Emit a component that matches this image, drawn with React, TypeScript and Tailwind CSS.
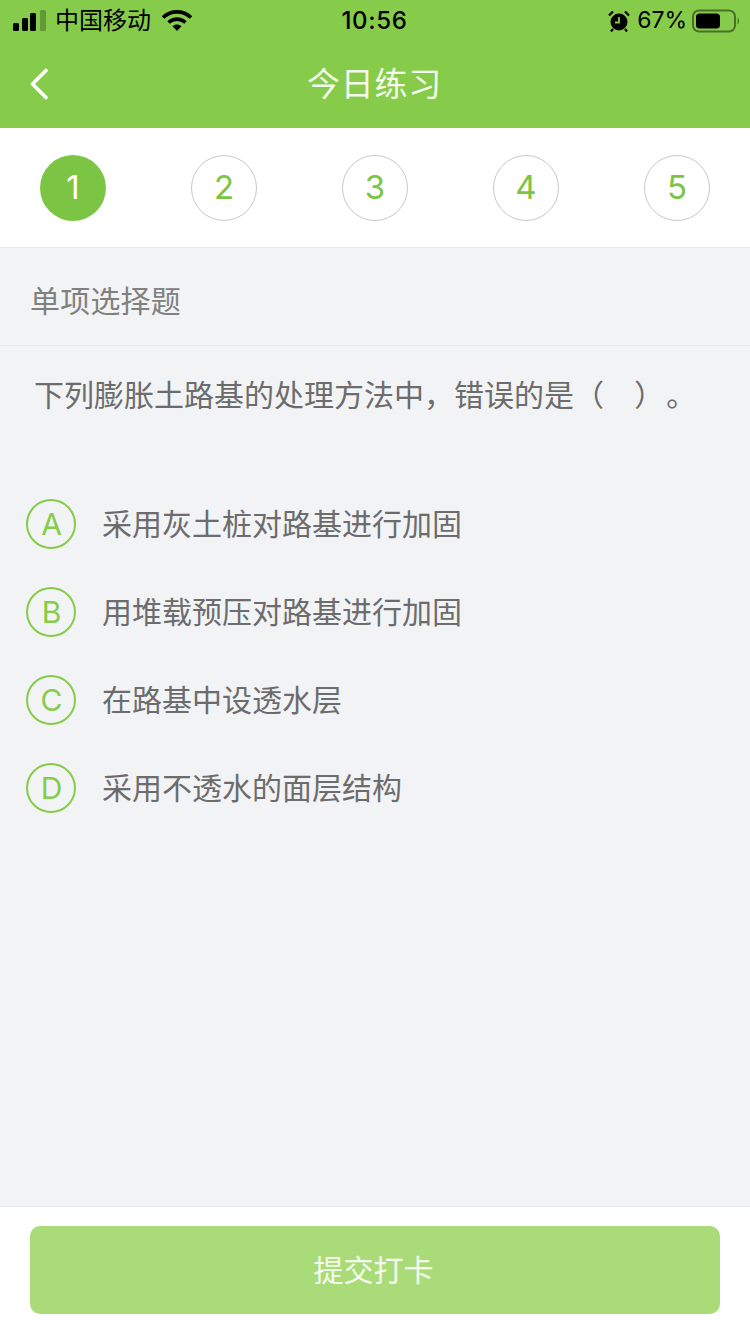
import React from "react";

const font = { fontFamily: '"Inter", "Noto Sans CJK SC", sans-serif' };

const steps = ["1", "2", "3", "4", "5"];
const options = [
  { key: "A", text: "采用灰土桩对路基进行加固" },
  { key: "B", text: "用堆载预压对路基进行加固" },
  { key: "C", text: "在路基中设透水层" },
  { key: "D", text: "采用不透水的面层结构" },
];

const StatusBar = () => (
  <div className="flex h-[40px] items-center justify-between pl-[13px] pr-[11px] pt-[1px] text-black">
    <div className="flex w-[240px] items-center">
      <svg width="33" height="21" viewBox="0 0 33 21" className="mr-[9px]">
        <rect x="0" y="13" width="6" height="8" rx="1.5" fill="#000" />
        <rect x="9" y="8" width="6" height="13" rx="1.5" fill="#000" />
        <rect x="17" y="3" width="6" height="18" rx="1.5" fill="#000" />
        <rect x="27" y="0" width="6" height="21" rx="1.5" fill="#000" opacity="0.25" />
      </svg>
      <span className="text-[24px] leading-none">中国移动</span>
      <svg width="30" height="22" viewBox="0 0 30 22" className="ml-[11px]">
        <path d="M1 7.5C9 0 21 0 29 7.5" fill="none" stroke="#000" strokeWidth="3.6" />
        <path d="M6.5 12.5C11.5 8 18.5 8 23.5 12.5" fill="none" stroke="#000" strokeWidth="3.6" />
        <path d="M10.5 16.2C13.5 13.8 16.5 13.8 19.5 16.2L15 21Z" fill="#000" />
      </svg>
    </div>
    <span className="text-[24px] font-medium leading-none tracking-[0.7px]">10:56</span>
    <div className="flex w-[243px] items-center justify-end">
      <svg width="22" height="22" viewBox="0 0 22 22" className="mr-[7px]">
        <circle cx="11" cy="12" r="8.5" fill="#000" />
        <path d="M11 7v5.500H7" fill="none" stroke="#86cc4a" strokeWidth="1.8" />
        <path d="M1 5.500L5 1.500M21 5.500L17 1.500M5 19l-2 2.500M17 19l2 2.500" stroke="#000" strokeWidth="2.2" />
      </svg>
      <span className="text-[23px] leading-none">67%</span>
      <svg width="47" height="24" viewBox="0 0 47 24" className="ml-[5px]">
        <rect x="1" y="1.5" width="42" height="21" rx="6" fill="none" stroke="#000" strokeOpacity="0.45" strokeWidth="2" />
        <rect x="4" y="4.5" width="24" height="15" rx="3.5" fill="#000" />
        <path d="M45.500 8.500c1 .6 1.500 2 1.500 3.500s-.5 2.900-1.500 3.500z" fill="#000" fillOpacity="0.45" />
      </svg>
    </div>
  </div>
);

export default function App() {
  return (
    <div className="flex h-[1334px] w-[750px] flex-col overflow-hidden bg-[#f2f3f5]" style={font}>
      <header className="h-[128px] bg-[#86cc4a]">
        <StatusBar />
        <div className="relative flex h-[88px] items-center justify-center pt-[1px]">
          <svg width="20" height="32" viewBox="0 0 20 32" className="absolute left-[29px] top-[28px]">
            <path d="M17 2.500 3.500 16 17 29.500" fill="none" stroke="#fff" strokeWidth="3.6" strokeLinecap="round" strokeLinejoin="round" />
          </svg>
          <h1 className="mr-[1px] text-[33px] font-normal leading-none tracking-[0.8px] text-[#f4fbee]">今日练习</h1>
        </div>
      </header>

      <div className="flex h-[120px] items-center justify-between border-b border-[#e8e8e8] bg-white px-[40px] pt-[1px]">
        {steps.map((n, i) => (
          <div
            key={n}
            className={
              i === 0
                ? "flex h-[66px] w-[66px] items-center justify-center rounded-full bg-[#7cc544] text-[33px] text-white"
                : "flex h-[66px] w-[66px] items-center justify-center rounded-full border border-[#c8c8c8] bg-white text-[33px] text-[#7cc544]"
            }
          >
            {n}
          </div>
        ))}
      </div>

      <div className="flex h-[98px] items-center border-b border-[#e9eaec] pl-[30px] pt-[8px] text-[30px] leading-none tracking-[0.2px] text-[#808080]">
        单项选择题
      </div>

      <p className="pl-[34px] pt-[34px] text-[30px] leading-none text-[#6c6c6c] [text-spacing-trim:space-all]">
        下列膨胀土路基的处理方法中，错误的是（ &nbsp;&nbsp;<span className="ml-[5px]">）</span><span className="ml-[2px]">。</span>
      </p>

      <ul className="flex flex-col gap-[38px] pl-[26px] pt-[89px]">
        {options.map((o) => (
          <li key={o.key} className="flex h-[50px] items-center">
            <span className="flex h-[50px] w-[50px] items-center justify-center rounded-full border-2 border-[#86cc4a] pl-[1px] pt-[1px] text-[30px] text-[#86cc4a]">
              {o.key}
            </span>
            <span className="ml-[26px] text-[30px] leading-none text-[#6c6c6c]">{o.text}</span>
          </li>
        ))}
      </ul>

      <footer className="mt-auto flex h-[128px] items-start border-t border-[#e8e8e8] bg-white px-[30px] pt-[19px]">
        <button className="flex h-[88px] w-[690px] items-center justify-center rounded-[10px] bg-[#a9dc78] pr-[3px] text-[30px] text-[#f6fbf0]">
          提交打卡
        </button>
      </footer>
    </div>
  );
}
